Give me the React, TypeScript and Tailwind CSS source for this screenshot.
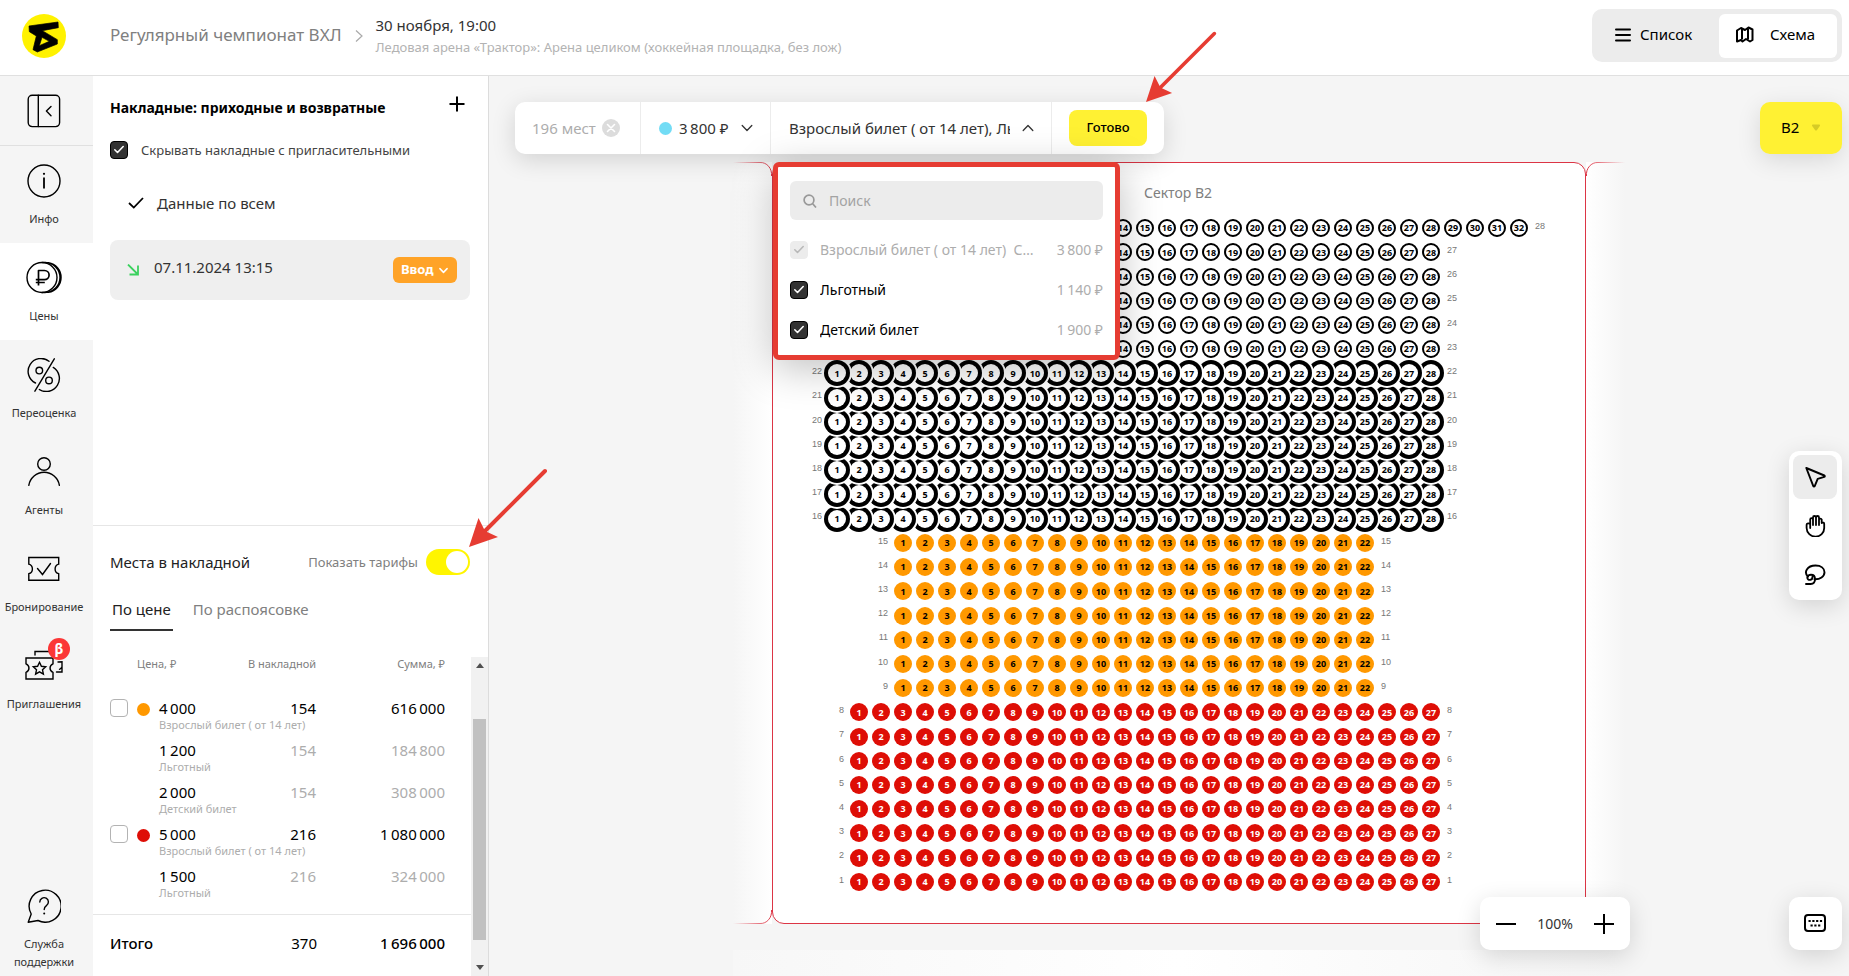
import React from "react";

type IconProps = { className?: string };

const THIN = "\u2009";

/* ---------- icons ---------- */

const Logo = () => (
  <svg viewBox="0 0 132 132" className="size-11" aria-hidden="true">
    <circle cx="66" cy="66" r="66" fill="#fff200" />
    <path
      fillRule="evenodd"
      d="M21 36 L108 24 L109 41 L61 50 L106 77 V90 L46 114 L33 107 L43 66 L22 53 Z M60 70 L52 95 L82 82 Z"
      fill="#000"
      stroke="#000"
      strokeWidth="2"
      strokeLinejoin="round"
    />
  </svg>
);

const stroke = {
  fill: "none",
  stroke: "currentColor",
  strokeWidth: 1.4,
  strokeLinecap: "round" as const,
  strokeLinejoin: "round" as const,
};

const CollapseIcon = () => (
  <svg viewBox="0 0 34 34" className="size-[34px]" {...stroke}>
    <rect x="1.2" y="1.2" width="31.4" height="31.4" rx="4" />
    <path d="M11.3 1.2v31.4M24 12.5l-4.6 4.6 4.6 4.6" />
  </svg>
);

const InfoIcon = () => (
  <svg viewBox="0 0 34 34" className="size-[34px]" {...stroke}>
    <circle cx="17" cy="17" r="16" />
    <path d="M17 13.5v11" strokeWidth="1.8" strokeLinecap="butt" />
    <circle cx="17" cy="9.8" r="1.1" fill="currentColor" stroke="none" />
  </svg>
);

const PriceIcon = () => (
  <svg viewBox="0 0 36 34" className="h-[34px] w-9" {...stroke}>
    <circle cx="16" cy="16.500" r="15" />
    <path d="M19 1.500a15 15 0 0 1 0 30M22.500 1.700a15 15 0 0 1 0 29.600M16 1.500h4M16 31.500h4" />
    <path d="M12.500 24.500V9.500h6a4.600 4.600 0 0 1 0 9.200h-8.700M9.800 21.500h9" strokeWidth="1.700" strokeLinecap="butt" />
  </svg>
);

const PercentIcon = () => (
  <svg viewBox="0 0 34 34" className="size-[34px]" {...stroke}>
    <path d="M22 3.200A12.900 12.900 0 1 0 8.500 25M12.300 31.500A13 13 0 1 0 26.300 9.400" />
    <path d="M27.300 .8L7.900 33.200" />
    <circle cx="12.300" cy="12.600" r="3.300" />
    <circle cx="22" cy="22.400" r="3.300" />
  </svg>
);

const PersonIcon = () => (
  <svg viewBox="0 0 34 34" className="size-[34px]" {...stroke}>
    <circle cx="17" cy="9" r="6.300" />
    <path d="M1.800 30.300a15.500 15.500 0 0 1 30.600 0" />
  </svg>
);

const BookingIcon = () => (
  <svg viewBox="0 0 34 34" className="size-[34px]" {...stroke} strokeLinejoin="miter">
    <path d="M1.800 5.500h29.900v6.600a5 5 0 0 0 0 9.600v6.600H1.800v-6.600a5 5 0 0 0 0-9.600z" />
    <path d="M10.500 16.500l5 6 8-11" />
  </svg>
);

const InviteIcon = () => (
  <svg viewBox="0 0 40 34" className="h-[34px] w-10" {...stroke} strokeLinejoin="miter">
    <path d="M2 9h27v5.800a4.600 4.600 0 0 0 0 8.600V30H2v-6.600a4.600 4.600 0 0 0 0-8.600z" />
    <path d="M11 6V2.500h15M34 13l4-.2v5a4 4 0 0 1-2.500 2.500M32.500 23H38v-8" />
    <path d="M15.500 13.300l1.900 4 4.300.5-3.200 3 .9 4.300-3.900-2.200-3.900 2.200.9-4.300-3.200-3 4.300-.5z" />
  </svg>
);

const HelpIcon = () => (
  <svg viewBox="0 0 34 34" className="size-[34px]" {...stroke}>
    <path d="M1.200 33.200l3-8.200A16 16 0 1 1 11 31.500z" />
    <path d="M12.800 13a4.300 4.300 0 1 1 6.600 3.600c-1.700 1.200-2.200 2-2.200 4" />
    <circle cx="17.200" cy="24.500" r="1" fill="currentColor" stroke="none" />
  </svg>
);

const Chevron = ({ className = "size-3" }: IconProps) => (
  <svg viewBox="0 0 12 12" className={className} fill="none" stroke="currentColor" strokeWidth="1.300" strokeLinecap="round" strokeLinejoin="round">
    <path d="M1.200 3.500L6 8.500l4.800-5" />
  </svg>
);

const Tick = ({ className = "" }: IconProps) => (
  <svg viewBox="0 0 12 12" className={`pointer-events-none ${className}`} fill="none" stroke="currentColor" strokeWidth="1.600" strokeLinecap="round" strokeLinejoin="round">
    <path d="M1.800 5.800l2.700 2.700 5.700-6" />
  </svg>
);

const ListIcon = () => (
  <svg viewBox="0 0 16 16" className="size-4" stroke="currentColor" strokeWidth="2" strokeLinecap="round">
    <path d="M1 2.500h14M1 8h14M1 13.500h14" />
  </svg>
);

const MapIcon = () => (
  <svg viewBox="0 0 20 18" className="h-[18px] w-5" fill="none" stroke="currentColor" strokeWidth="2" strokeLinejoin="round">
    <path d="M2 4.500l4-2.500 4 2 3.500-2.500 4 2v10.500l-2.500 1.500-4-2.500-3.500 2.500-1.500-1.500-4 1.500z" />
    <path d="M7 2.500v11M13 2.500v11" />
  </svg>
);

const CursorIcon = () => (
  <svg viewBox="0 0 22 22" className="size-[22px]" {...stroke} strokeWidth="1.900">
    <path d="M2.300 2l18 7.500c.7.300.7 1.200 0 1.400l-6.600 1.900-3 7.300c-.3.700-1.100.7-1.400 0z" />
  </svg>
);

const HandIcon = () => (
  <svg viewBox="0 0 22 22" className="size-[22px]" {...stroke} strokeWidth="1.800">
    <path d="M6.200 13V4.600a1.400 1.400 0 0 1 2.800 0V10V2.500a1.400 1.400 0 0 1 3 0V10V2.500a1.400 1.400 0 0 1 3 0V10V4.600a1.400 1.400 0 0 1 2.700 0V8c1.500-1 2.500-.2 2.500 1v4a8.500 8.500 0 0 1-8.700 8.600A8.800 8.800 0 0 1 2.600 13V9.800c0-1.800 2.500-1.800 3.600-.8" />
  </svg>
);

const LassoIcon = () => (
  <svg viewBox="0 0 22 22" className="size-[22px]" {...stroke} strokeWidth="1.900">
    <path d="M4 12.500C-.5 8.500 3 1.500 11.500 1.500c5.500 0 9 2.800 9 6.800 0 4.300-4.500 7.200-10 6.900" />
    <path d="M2 20h4.700c3 0 4.400-2 4.300-5 0-2.500-1.600-4.200-4-4.200-2 0-3.700 1-3.700 2.700s1.400 2.600 3.100 2.300c1.500-.3 2.200-1.300 2-2.900" />
  </svg>
);

const KeyboardIcon = () => (
  <svg viewBox="0 0 22 18" className="h-[18px] w-[22px]" fill="none" stroke="currentColor">
    <rect x="1" y="1" width="20" height="16" rx="3" strokeWidth="2" />
    <path d="M4.500 7h14M6.500 11.500h10" strokeWidth="2.200" strokeDasharray="2.200 1.600" />
  </svg>
);

/* ---------- form parts ---------- */

const Checkbox = ({ id, checked, disabled, label }: { id: string; checked?: boolean; disabled?: boolean; label?: string }) => (
  <span className="grid size-[18px] shrink-0 place-items-center">
    <input
      id={id}
      type="checkbox"
      defaultChecked={checked}
      disabled={disabled}
      aria-label={label}
      className="peer col-start-1 row-start-1 size-[18px] appearance-none rounded border border-[#b3b3b3] bg-white checked:border-black checked:bg-[#333] disabled:border-[#ececec] disabled:bg-[#ececec]"
    />
    <Tick className="col-start-1 row-start-1 hidden size-3 text-white peer-checked:block peer-disabled:text-[#b8b8b8]" />
  </span>
);

/* ---------- side navigation ---------- */

const NAV = [
  { label: "Инфо", icon: <InfoIcon /> },
  { label: "Цены", icon: <PriceIcon />, active: true },
  { label: "Переоценка", icon: <PercentIcon /> },
  { label: "Агенты", icon: <PersonIcon /> },
  { label: "Бронирование", icon: <BookingIcon /> },
  { label: "Приглашения", icon: <InviteIcon />, badge: "β" },
];

const SideNav = () => (
  <nav className="flex w-[93px] shrink-0 flex-col bg-[#f5f5f5] text-[11px] leading-[18px] text-[#333]">
    <button aria-label="Свернуть" className="flex h-[70px] w-full items-center justify-center border-b border-[#e0e0e0] pr-[5px] text-black">
      <CollapseIcon />
    </button>
    {NAV.map((n) => (
      <a key={n.label} href="#" className={`flex h-[97px] flex-col items-center pt-[18px] pr-[5px] ${n.active ? "bg-white" : ""}`}>
        <span className="relative text-black">
          {n.icon}
          {n.badge && (
            <span className="absolute -top-[11px] left-[24px] grid size-[22px] place-items-center rounded-full bg-[#fb3636] text-sm font-bold text-white">
              {n.badge}
            </span>
          )}
        </span>
        <span className="mt-[12px]">{n.label}</span>
      </a>
    ))}
    <a href="#" className="mt-auto flex flex-col items-center pr-[5px] pb-[5px] text-center">
      <span className="mb-[12px] text-black">
        <HelpIcon />
      </span>
      Служба
      <br />
      поддержки
    </a>
  </nav>
);

/* ---------- invoices panel ---------- */

type PriceRow = { price: string; name: string; count: string; sum: string; color?: string };

const ROWS: PriceRow[] = [
  { price: `4${THIN}000`, name: "Взрослый билет ( от 14 лет)", count: "154", sum: `616${THIN}000`, color: "bg-[#ff9800]" },
  { price: `1${THIN}200`, name: "Льготный", count: "154", sum: `184${THIN}800` },
  { price: `2${THIN}000`, name: "Детский билет", count: "154", sum: `308${THIN}000` },
  { price: `5${THIN}000`, name: "Взрослый билет ( от 14 лет)", count: "216", sum: `1${THIN}080${THIN}000`, color: "bg-[#de0e06]" },
  { price: `1${THIN}500`, name: "Льготный", count: "216", sum: `324${THIN}000` },
  { price: `2${THIN}500`, name: "Детский билет", count: "216", sum: `540${THIN}000` },
];

const PriceTable = () => (
  <div className="flex min-h-0 flex-1">
    <div className="flex min-w-0 flex-1 flex-col">
      <div className="min-h-0 flex-1 overflow-hidden">
        <table className="w-full table-fixed border-collapse text-[15px] leading-5">
          <colgroup>
            <col className="w-[44px]" />
            <col className="w-[22px]" />
            <col className="w-[50px]" />
            <col className="w-[107px]" />
            <col />
          </colgroup>
          <thead>
            <tr className="h-[33px] align-top text-[11px] leading-[14px] text-[#808080]">
              <th />
              <th colSpan={2} className="text-left font-normal">Цена, ₽</th>
              <th className="text-right font-normal">В накладной</th>
              <th className="pr-[26px] text-right font-normal">Сумма, ₽</th>
            </tr>
          </thead>
          <tbody>
            {ROWS.map((r, i) => (
              <tr key={i} className={`h-[42px] align-top ${r.color ? "" : "text-[#adadad]"}`}>
                <td className="pt-[9px] pl-[17px]">
                  {r.color && <Checkbox id={`row-${i}`} label={r.price} />}
                </td>
                <td className="pt-[13px]">
                  {r.color && <span className={`block size-[13px] rounded-full ${r.color}`} />}
                </td>
                <td className="pt-[8px] whitespace-nowrap">
                  <span className="block text-black">{r.price}</span>
                  <span className="block text-[11px] leading-[13px] text-[#adadad]">{r.name}</span>
                </td>
                <td className="pt-[8px] text-right">{r.count}</td>
                <td className="pt-[8px] pr-[26px] text-right">{r.sum}</td>
              </tr>
            ))}
          </tbody>
        </table>
      </div>
      <div className="flex h-[62px] shrink-0 items-center border-t border-[#e6e6e6] pr-[26px] pb-[4px] pl-[17px] text-[15px]">
        <span className="flex-1 font-medium">Итого</span>
        <span className="text-right">370</span>
        <span className="w-[128px] text-right font-medium">{`1${THIN}696${THIN}000`}</span>
      </div>
    </div>
    <div className="flex w-[17px] shrink-0 flex-col items-center justify-between bg-[#f1f1f1] py-[6px]" aria-hidden="true">
      <svg viewBox="0 0 8 5" className="h-[5px] w-2" fill="#505050"><path d="M0 5L4 0l4 5z" /></svg>
      <span className="mt-[51px] mb-[25px] w-[13px] flex-1 bg-[#c1c1c1]" />
      <svg viewBox="0 0 8 5" className="h-[5px] w-2" fill="#505050"><path d="M0 0h8L4 5z" /></svg>
    </div>
  </div>
);

const InvoicesPanel = () => (
  <aside className="flex w-[396px] shrink-0 flex-col border-r border-[#dcdcdc] bg-white">
    <section className="flex h-[449px] shrink-0 flex-col pr-[18px] pl-[17px]">
      <div className="flex items-center justify-between pt-[14px] pr-[5px]">
        <h2 className="pt-[8px] text-sm leading-5 font-bold">Накладные: приходные и возвратные</h2>
        <button aria-label="Добавить накладную">
          <svg viewBox="0 0 16 16" className="size-4" stroke="currentColor" strokeWidth="2">
            <path d="M8 .5v15M.5 8h15" />
          </svg>
        </button>
      </div>
      <label className="mt-[22px] flex items-center gap-[13px] text-[13px] leading-5 text-[#444]">
        <Checkbox id="hide-invites" checked />
        Скрывать накладные с пригласительными
      </label>
      <button className="mt-[31px] flex items-center gap-[13px] pl-[18px] text-[15px] leading-6 text-[#333]">
        <svg viewBox="0 0 16 12" className="h-3 w-4" fill="none" stroke="#000" strokeWidth="1.800">
          <path d="M1 6l4.800 4.600L15 1" />
        </svg>
        Данные по всем
      </button>
      <div className="mt-[25px] flex h-[60px] items-center rounded-lg bg-[#efefef] pr-[13px] pl-[17px] text-[15px] text-[#333]">
        <svg viewBox="0 0 12 12" className="mr-[15px] size-3" fill="none" stroke="#3bd15e" strokeWidth="1.800">
          <path d="M1 .5L10.500 10M11 1.500V10.500H2.500" />
        </svg>
        <span className="flex-1 pb-[5px]">07.11.2024 13:15</span>
        <button className="flex h-[26px] w-16 items-center justify-between rounded-md bg-[#ffa327] pr-[9px] pl-[8px] text-[13px] font-bold text-white">
          Ввод
          <Chevron className="size-[9px] stroke-2" />
        </button>
      </div>
    </section>
    <section className="flex min-h-0 flex-1 flex-col border-t border-[#e6e6e6]">
      <div className="flex items-center pt-[23px] pr-[18px] pl-[17px]">
        <h2 className="flex-1 text-[15px] leading-6 text-[#222]">Места в накладной</h2>
        <label htmlFor="show-tariffs" className="mr-[8px] text-[13px] leading-6 text-[#808080]">Показать тарифы</label>
        <span className="grid h-[26px] w-11 items-center">
          <input id="show-tariffs" type="checkbox" role="switch" defaultChecked className="peer col-start-1 row-start-1 h-[26px] w-11 appearance-none rounded-full bg-[#ccc] checked:bg-[#fff500]" />
          <span className="pointer-events-none col-start-1 row-start-1 ml-[2px] size-[22px] rounded-full bg-white peer-checked:ml-5" />
        </span>
      </div>
      <div role="tablist" className="flex gap-[18px] pt-[22px] pl-[17px] text-[15px]">
        <button role="tab" aria-selected="true" className="border-b-2 border-[#333] px-[2px] pb-[8px] leading-6 text-[#222]">По цене</button>
        <button role="tab" aria-selected="false" className="border-b-2 border-transparent px-[2px] pb-[8px] leading-6 text-[#808080]">По распоясовке</button>
      </div>
      <div className="flex min-h-0 flex-1 pt-[26px]">
        <PriceTable />
      </div>
    </section>
  </aside>
);

/* ---------- seat map ---------- */

type Kind = "free" | "picked" | "orange" | "red";
type SeatRow = { row: number; offset: number; seats: number; kind: Kind };

const SEAT_ROWS: SeatRow[] = Array.from({ length: 28 }, (_, i) => {
  const row = 28 - i;
  if (row > 22) return { row, offset: 0, seats: row === 28 ? 32 : 28, kind: "free" as Kind };
  if (row > 15) return { row, offset: 0, seats: 28, kind: "picked" as Kind };
  if (row > 8) return { row, offset: 3, seats: 22, kind: "orange" as Kind };
  return { row, offset: 1, seats: 27, kind: "red" as Kind };
});

const SEAT_STYLE: Record<Kind, string> = {
  free: "border-2 border-black bg-white text-black",
  picked: "bg-white text-black shadow-[0_0_0_4px_#000,0_0_0_6px_#fff]",
  orange: "bg-[#ff9800] text-black",
  red: "bg-[#de0e06] text-white",
};

const SeatMap = () => (
  <div className="isolate mt-[11px] ml-9 grid h-[678px] auto-rows-fr text-[9px]">
    {SEAT_ROWS.map((r) => (
      <div key={r.row} className="flex items-center" style={{ zIndex: r.row, paddingLeft: r.offset * 22 }}>
        <span className="w-[17px] pr-[4px] pb-[3px] text-right font-[Liberation_Sans] text-[#777]">{r.row}</span>
        {Array.from({ length: r.seats }, (_, s) => (
          <span key={s} className="flex w-[22px] shrink-0 justify-center" style={{ zIndex: 40 - s }}>
            <button className={`grid size-[18px] place-items-center rounded-full font-bold ${SEAT_STYLE[r.kind]}`}>{s + 1}</button>
          </span>
        ))}
        <span className="pb-[3px] pl-[5px] font-[Liberation_Sans] text-[#777]">{r.row}</span>
      </div>
    ))}
  </div>
);

/* Fading edge of the neighbouring sector; `flip` mirrors it for the right side. */
const NeighbourEdge = ({ flip }: { flip?: boolean }) => {
  const id = flip ? "edge-r" : "edge-l";
  return (
    <div className={`flex w-[39px] flex-col justify-between bg-linear-to-r from-[#f5f5f5] to-white ${flip ? "-scale-x-100" : ""}`} aria-hidden="true">
      <svg viewBox="0 0 39 14" className="h-3.5 w-[39px]" fill="none">
        <defs>
          <linearGradient id={id} gradientUnits="userSpaceOnUse" x1="0" y1="0" x2="39" y2="0">
            <stop offset="0" stopColor="#dc3545" stopOpacity="0" />
            <stop offset="1" stopColor="#dc3545" />
          </linearGradient>
        </defs>
        <path d="M0 .5h27a11 12 0 0 1 11.500 13.500" stroke={`url(#${id})`} />
      </svg>
      <svg viewBox="0 0 39 14" className="h-3.5 w-[39px]" fill="none">
        <path d="M0 13.500h27A11 12 0 0 0 38.500 0" stroke={`url(#${id})`} />
      </svg>
    </div>
  );
};

const floating = "bg-white shadow-[0_6px_24px_rgba(0,0,0,0.14)]";

const TARIFFS = [
  { name: "Взрослый билет ( от 14 лет)  С…", price: `3${THIN}800 ₽`, disabled: true },
  { name: "Льготный", price: `1${THIN}140 ₽` },
  { name: "Детский билет", price: `1${THIN}900 ₽` },
];

const TariffMenu = () => (
  <div className="absolute top-[86px] left-[284px] z-20 w-[347px] rounded-md border-[5px] border-[#e63c32] bg-white px-[12px] pt-[14px] pb-[5px] shadow-[0_8px_40px_rgba(0,0,0,0.25)]">
    <label className="flex h-[39px] items-center gap-[12px] rounded-md bg-[#ececec] px-[13px] text-[#999]">
      <svg viewBox="0 0 14 14" className="size-3.5" fill="none" stroke="currentColor" strokeWidth="1.700">
        <circle cx="6" cy="6" r="4.900" />
        <path d="M9.500 9.500l3.500 4" />
      </svg>
      <input type="search" placeholder="Поиск" aria-label="Поиск" className="min-w-0 flex-1 bg-transparent text-sm outline-none placeholder:text-[#a3a3a3]" />
    </label>
    <ul className="mt-[10px] text-sm">
      {TARIFFS.map((t, i) => (
        <li key={t.name} className="flex h-[40px] items-center">
          <Checkbox id={`tariff-${i}`} checked disabled={t.disabled} />
          <label htmlFor={`tariff-${i}`} className={`ml-[12px] flex-1 truncate whitespace-pre ${t.disabled ? "text-[#adadad]" : "text-black"}`}>{t.name}</label>
          <span className="shrink-0 text-[#adadad]">{t.price}</span>
        </li>
      ))}
    </ul>
  </div>
);

const SelectionBar = () => (
  <div className={`absolute top-[26px] left-[26px] z-10 flex h-[52px] items-stretch rounded-[10px] text-[15px] text-[#333] ${floating}`}>
    <div className="flex w-[126px] items-center gap-[6px] border-r border-[#ececec] pl-[17px] text-[#adadad]">
      196 мест
      <button aria-label="Сбросить выбор" className="grid size-[18px] place-items-center rounded-full bg-[#dcdcdc] text-white">
        <svg viewBox="0 0 10 10" className="size-2.5" stroke="currentColor" strokeWidth="1.600" strokeLinecap="round">
          <path d="M1.500 1.500l7 7M8.500 1.500l-7 7" />
        </svg>
      </button>
    </div>
    <label className="flex w-[130px] items-center border-r border-[#ececec] pr-[17px] pl-[18px]">
      <span className="mr-[7px] size-[13px] shrink-0 rounded-full bg-[#72dcf5]" />
      <select aria-label="Цена" className="min-w-0 flex-1 appearance-none bg-transparent outline-none">
        <option>{`3${THIN}800 ₽`}</option>
      </select>
      <Chevron />
    </label>
    <button aria-expanded="true" className="flex w-[281px] items-center justify-between border-r border-[#ececec] pr-[17px] pl-[18px] text-[15px]">
      <span className="w-[221px] overflow-hidden text-left whitespace-nowrap">Взрослый билет ( от 14 лет), Льготный</span>
      <Chevron className="size-3 rotate-180" />
    </button>
    <div className="flex items-center px-[17px]">
      <button className="h-9 w-[78px] rounded-lg bg-[#fff133] text-[13px] font-medium text-black">Готово</button>
    </div>
  </div>
);

const Canvas = () => (
  <main className="relative flex min-w-0 flex-1 flex-col overflow-hidden bg-[#f5f5f5]">
    <div className="flex shrink-0 justify-center pt-[86px] pl-5">
      <NeighbourEdge />
      <section className="h-[762px] w-[814px] rounded-xl border border-[#dc3545] bg-white">
        <h1 className="pr-[2px] pt-[18px] text-center text-sm leading-6 text-[#808080]">Сектор B2</h1>
        <SeatMap />
      </section>
      <NeighbourEdge flip />
    </div>
    <div className="mt-[26px] flex flex-1 justify-center pl-5">
      <div className="w-[892px] bg-linear-to-r from-[#f7f7f7] via-white to-[#f5f5f5]" />
    </div>

    <SelectionBar />
    <TariffMenu />

    <label className="absolute top-[26px] right-[7px] flex h-[52px] w-[82px] items-center rounded-[10px] bg-[#fff133] pr-[21px] pb-[2px] pl-[21px] shadow-[0_6px_24px_rgba(0,0,0,0.12)]">
      <select aria-label="Сектор" className="min-w-0 flex-1 appearance-none bg-transparent text-[15px] outline-none">
        <option>B2</option>
      </select>
      <svg viewBox="0 0 10 7" className="h-[7px] w-2.5" fill="#d6cb26" aria-hidden="true"><path d="M1.500.5h7q1 .5.300 1.500L6 6q-1 1-2 0L1.200 2Q.5 1 1.500.5z" /></svg>
    </label>

    <div className={`absolute top-[375px] right-[7px] flex flex-col gap-[5px] rounded-[10px] pt-[4px] pr-[5px] pb-[3px] pl-[4px] ${floating}`}>
      <button aria-label="Выбор" className="grid size-11 place-items-center rounded-lg bg-[#ececec]"><CursorIcon /></button>
      <button aria-label="Рука" className="grid size-11 place-items-center"><HandIcon /></button>
      <button aria-label="Лассо" className="grid size-11 place-items-center"><LassoIcon /></button>
    </div>

    <div className="absolute right-[7px] bottom-[26px] flex gap-[159px]">
      <div className={`flex h-[53px] w-[150px] items-center justify-between rounded-[10px] px-[16px] ${floating}`}>
        <button aria-label="Уменьшить">
          <svg viewBox="0 0 20 20" className="size-5" stroke="currentColor" strokeWidth="2"><path d="M0 10h20" /></svg>
        </button>
        <span className="text-sm text-[#333]">100%</span>
        <button aria-label="Увеличить">
          <svg viewBox="0 0 20 20" className="size-5" stroke="currentColor" strokeWidth="2"><path d="M0 10h20M10 0v20" /></svg>
        </button>
      </div>
      <button aria-label="Клавиатура" className={`grid size-[53px] place-items-center rounded-[10px] pr-px pb-px ${floating}`}>
        <KeyboardIcon />
      </button>
    </div>
  </main>
);

/* ---------- header ---------- */

const Header = () => (
  <header className="flex h-[76px] shrink-0 items-start border-b border-[#e0e0e0] bg-white pr-[7px] pl-[22px]">
    <a href="#" aria-label="На главную" className="mt-[14px]">
      <Logo />
    </a>
    <a href="#" className="mt-[23px] ml-[44px] text-[17px] leading-6 text-[#808080]">Регулярный чемпионат ВХЛ</a>
    <svg viewBox="0 0 8 12" className="mt-[30px] mr-[13px] ml-[13px] h-3 w-2" fill="none" stroke="#aaa" strokeWidth="1.200">
      <path d="M1 .5L7 6l-6 5.500" />
    </svg>
    <div className="mt-[14px]">
      <p className="text-[15px] leading-[22px] text-[#333]">30 ноября, 19:00</p>
      <p className="text-[13px] leading-[22px] text-[#b3b3b3]">Ледовая арена «Трактор»: Арена целиком (хоккейная площадка, без лож)</p>
    </div>
    <div className="mt-[9px] ml-auto flex h-[53px] w-[250px] rounded-[10px] bg-[#ececec] p-[5px] pb-[4px] text-[15px]">
      <button className="flex flex-1 items-center gap-[9px] pb-[3px] pl-[18px]">
        <ListIcon />
        Список
      </button>
      <button className="flex w-[118px] items-center gap-[15px] rounded-md bg-white pb-[3px] pl-[16px]">
        <MapIcon />
        Схема
      </button>
    </div>
  </header>
);

/* Pointer arrow whose tip sits at the element's bottom-left corner. */
const PointerArrow = ({ className }: IconProps) => (
  <svg viewBox="0 0 80 80" className={`pointer-events-none absolute z-30 ${className}`} aria-hidden="true">
    <path d="M16 64L76 4" stroke="#e63c32" strokeWidth="4" strokeLinecap="round" />
    <path d="M0 80L9.500 51l6.500 13 13 6z" fill="#e63c32" />
  </svg>
);

export default function App() {
  return (
    <div className="relative flex h-screen flex-col overflow-hidden bg-white font-['Noto_Sans',sans-serif] text-black">
      <Header />
      <div className="flex min-h-0 flex-1">
        <SideNav />
        <InvoicesPanel />
        <Canvas />
      </div>
      <PointerArrow className="top-[30px] left-[1146px] size-[72px]" />
      <PointerArrow className="top-[467px] left-[469px] size-20" />
    </div>
  );
}
